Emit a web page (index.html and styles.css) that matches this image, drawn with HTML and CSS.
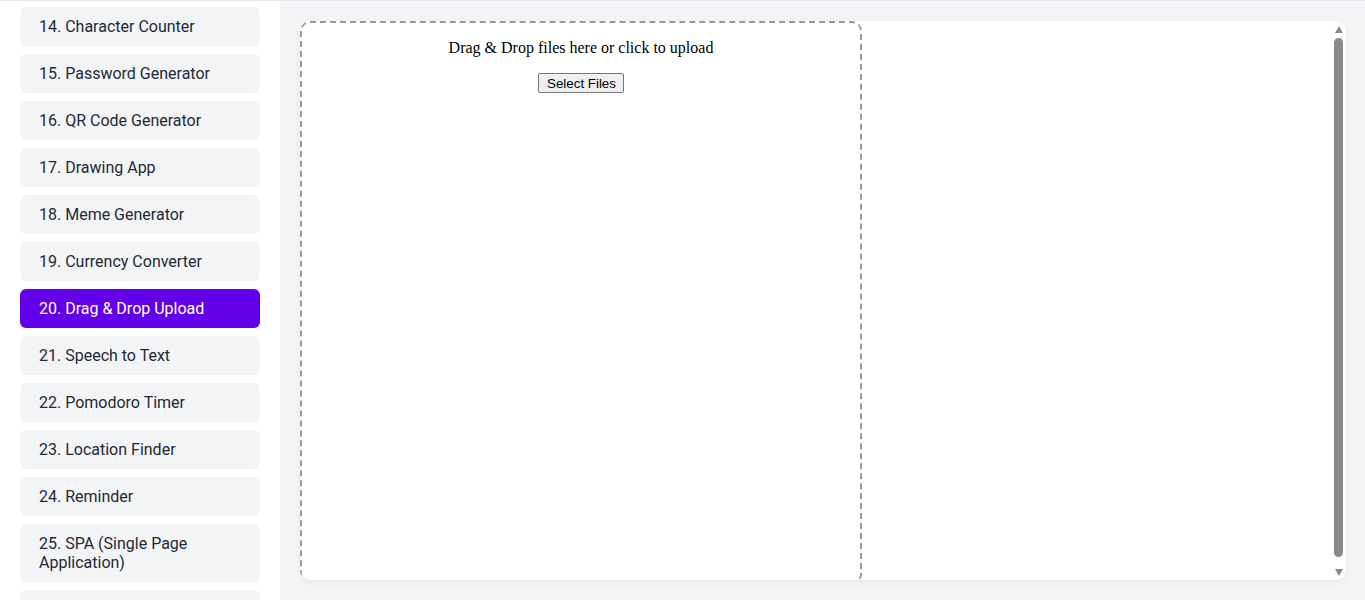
FILE: index.html
```html
<!DOCTYPE html>
<html lang="en">
<head>
<meta charset="utf-8">
<title>Drag &amp; Drop Upload</title>
<link rel="stylesheet" href="styles.css">
</head>
<body>
<div class="layout">
  <aside class="sidebar">
    <ul class="nav">
      <li class="nav-item">14. Character Counter</li>
      <li class="nav-item">15. Password Generator</li>
      <li class="nav-item">16. QR Code Generator</li>
      <li class="nav-item">17. Drawing App</li>
      <li class="nav-item">18. Meme Generator</li>
      <li class="nav-item">19. Currency Converter</li>
      <li class="nav-item active">20. Drag &amp; Drop Upload</li>
      <li class="nav-item">21. Speech to Text</li>
      <li class="nav-item">22. Pomodoro Timer</li>
      <li class="nav-item">23. Location Finder</li>
      <li class="nav-item">24. Reminder</li>
      <li class="nav-item">25. SPA (Single Page Application)</li>
      <li class="nav-item">26. Weather App</li>
    </ul>
  </aside>
  <main class="main">
    <section class="card">
      <div class="frame">
        <div class="dropzone">
          <p class="drop-text">Drag &amp; Drop files here or click to upload</p>
          <button class="select-btn" type="button">Select Files</button>
        </div>
      </div>
      <div class="scrollbar">
        <span class="arrow up"></span>
        <span class="thumb"></span>
        <span class="arrow down"></span>
      </div>
    </section>
  </main>
</div>
</body>
</html>
```

FILE: styles.css
```css
* { box-sizing: border-box; }
html, body { margin: 0; padding: 0; height: 100%; overflow: hidden; }
body {
  font-family: Roboto, "Liberation Sans", Arial, sans-serif;
  background: #f3f4f6;
}
.layout {
  display: flex;
  height: 600px;
  border-top: 1px solid #e3e5ef;
}
.sidebar {
  width: 280px;
  flex: 0 0 280px;
  background: #ffffff;
  padding: 6px 20px 0 20px;
  overflow: hidden;
}
.nav {
  list-style: none;
  margin: 0;
  padding: 0;
  display: flex;
  flex-direction: column;
  gap: 8px;
}
.nav-item {
  background: #f3f4f6;
  color: #1f2937;
  font-size: 16px;
  line-height: 19px;
  padding: 10px 19px;
  border-radius: 6px;
}
.nav-item.active {
  background: #6200ea;
  color: #ffffff;
}
.main {
  flex: 1;
  padding: 20px 19px 20px 20px;
  display: flex;
}
.card {
  flex: 1;
  background: #ffffff;
  border-radius: 10px;
  box-shadow: 0 2px 6px rgba(0, 0, 0, 0.06);
  overflow: hidden;
  display: flex;
}
.frame {
  flex: 1;
  overflow: hidden;
}
.dropzone {
  width: 562px;
  height: 563px;
  border: 2px dashed #999999;
  border-radius: 10px;
  text-align: center;
  font-family: "Liberation Serif", "Times New Roman", serif;
  color: #000000;
}
.drop-text {
  margin: 16px 0 16px 0;
  font-size: 16px;
}
.select-btn {
  font-family: "Liberation Sans", Arial, sans-serif;
  font-size: 13.33px;
  line-height: 15px;
  height: 20px;
  padding: 1px 7px 1px 8px;
  color: #000000;
  background: #efefef;
  border: 1px solid #767676;
  border-radius: 2px;
}
.scrollbar {
  width: 15px;
  flex: 0 0 15px;
  display: flex;
  flex-direction: column;
  align-items: center;
  padding: 5px 3px 4px 3px;
}
.arrow {
  width: 0;
  height: 0;
  border-left: 4.5px solid transparent;
  border-right: 4.5px solid transparent;
}
.arrow.up {
  border-bottom: 7px solid #8a8a8a;
  margin-bottom: 5px;
}
.arrow.down {
  border-top: 7px solid #8a8a8a;
  margin-top: 12px;
}
.thumb {
  width: 9px;
  flex: 1;
  background: #8a8a8a;
  border-radius: 4.5px;
}
```
